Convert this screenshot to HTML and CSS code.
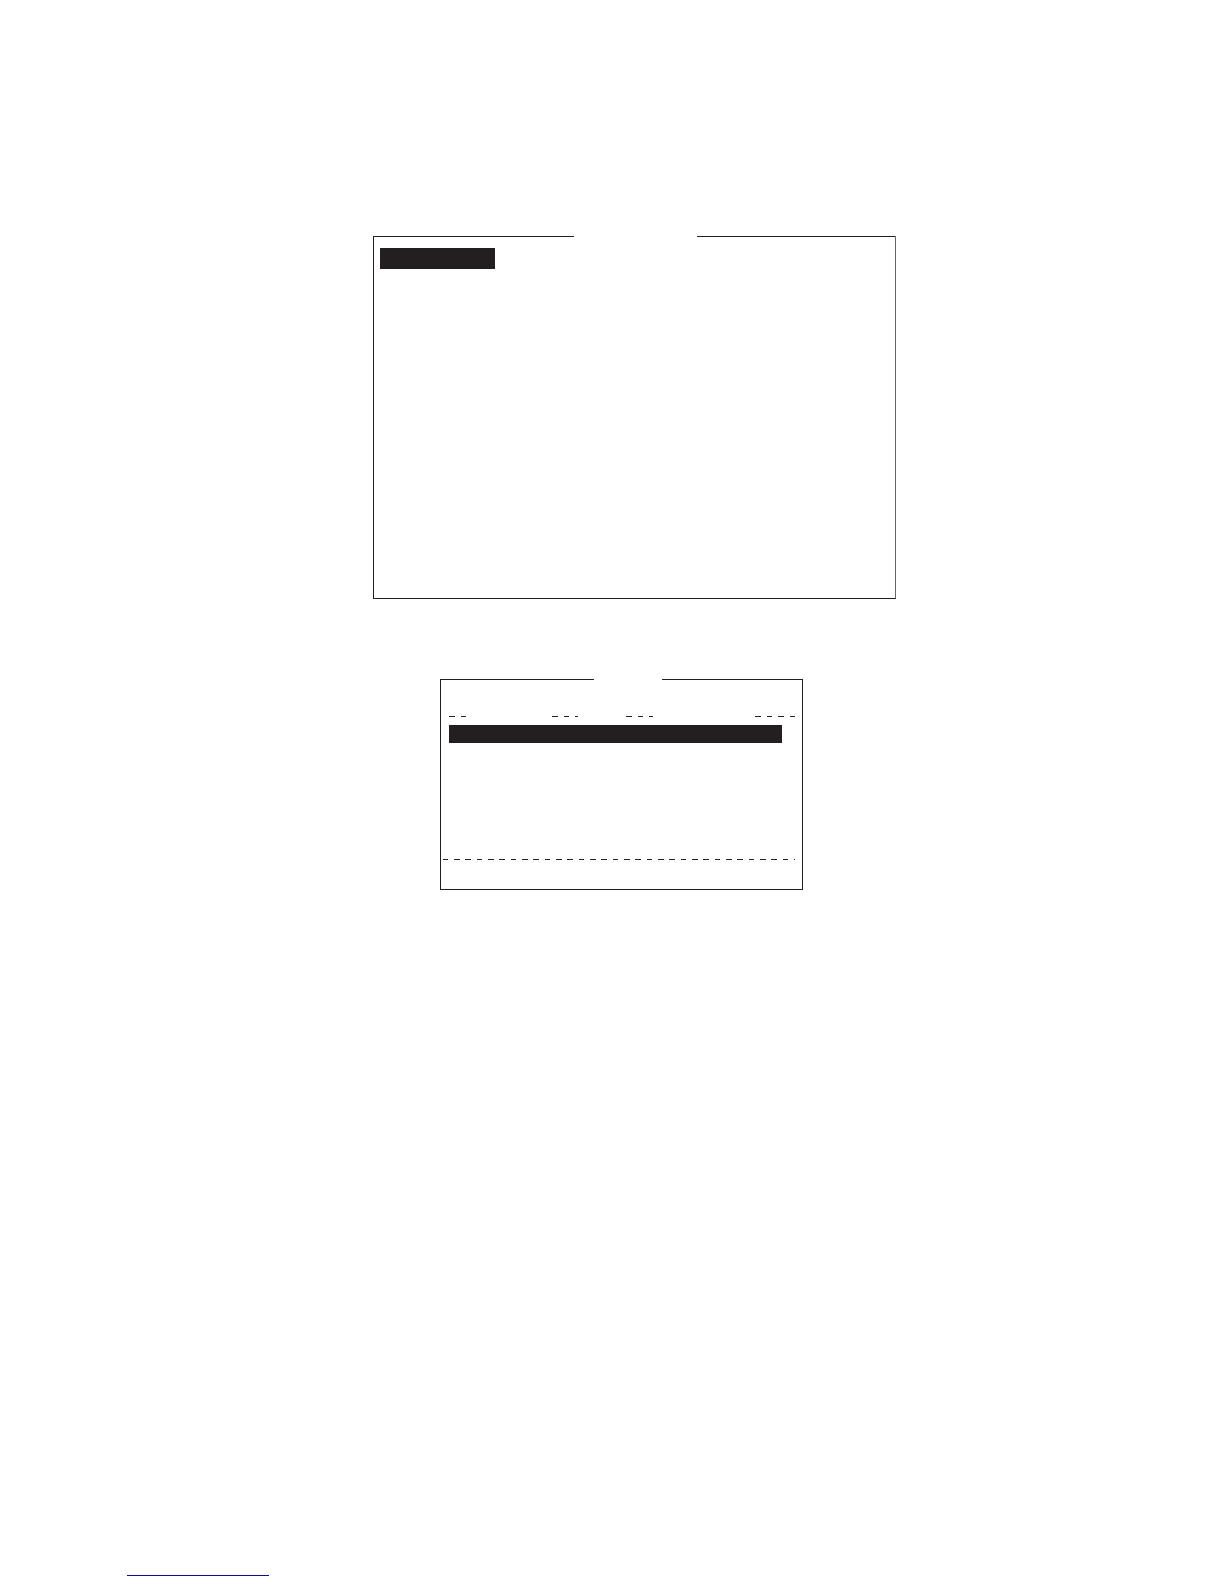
FILE: index.html
```
<!DOCTYPE html>
<html lang="en">
<head>
    <meta charset="UTF-8">
    <meta name="viewport" content="width=device-width, initial-scale=1.0">
    <title>Menu screens</title>
    <link rel="stylesheet" href="styles.css">
</head>
<body>
    <main class="screens">
        <section class="screen menu-screen">
            <div class="top-edge"><span></span><span></span></div>
            <div class="selected menu-item"></div>
        </section>

        <section class="screen list-screen">
            <div class="top-edge"><span></span><span></span></div>
            <div class="column-rules">
                <svg width="17" height="1"><line x2="17" y1="0.5" y2="0.5"/></svg>
                <svg width="26" height="1"><line x2="26" y1="0.5" y2="0.5"/></svg>
                <svg width="27" height="1"><line x2="27" y1="0.5" y2="0.5"/></svg>
                <svg width="40" height="1"><line x2="40" y1="0.5" y2="0.5"/></svg>
            </div>
            <div class="selected list-row"></div>
            <svg class="bottom-rule" height="1"><line x2="100%" y1="0.5" y2="0.5"/></svg>
        </section>
    </main>
    <footer>
        <a class="footer-link" href="#"></a>
    </footer>
</body>
</html>
```

FILE: styles.css
```
* {
    box-sizing: border-box;
}

body {
    font-family: Arial, "Liberation Sans", sans-serif;
    background-color: #fff;
    margin: 0;
    min-height: 100vh;
    display: flex;
    flex-direction: column;
}

.screens {
    display: flex;
    flex-direction: column;
    align-items: center;
    gap: 80px;
    padding-top: 236px;
}

.screen {
    border: 1px solid #231f20;
    border-top: none;
    max-width: 100%;
}

.menu-screen {
    width: 523px;
    min-height: 363px;
    margin-left: 45px;
    border-right-color: #666;
}

.list-screen {
    width: 363px;
    min-height: 211px;
    margin-left: 19px;
}

/* top border, open in the middle for the title */
.top-edge {
    display: flex;
    justify-content: space-between;
}

.top-edge span {
    height: 1px;
    background-color: #231f20;
}

.menu-screen .top-edge span:first-child {
    width: 200px;
}

.menu-screen .top-edge span:last-child {
    width: 198px;
}

.list-screen .top-edge span:first-child {
    width: 153px;
}

.list-screen .top-edge span:last-child {
    width: 140px;
}

.selected {
    background-color: #231f20;
}

.menu-item {
    width: 115px;
    height: 21px;
    margin: 11px 6px;
}

.column-rules {
    display: grid;
    grid-template-columns: 103px 74px 1fr 40px;
    margin: 36px 7px 8px 8px;
}

.list-row {
    height: 18px;
    margin: 0 20px 0 8px;
}

svg {
    display: block;
}

line {
    stroke: #231f20;
    stroke-width: 1px;
    stroke-dasharray: 6 6 5 6;
    shape-rendering: crispEdges;
}

.bottom-rule {
    width: calc(100% - 9px);
    margin: 116px 7px 0 2px;
}

.bottom-rule line {
    stroke-dasharray: 5 6 6 5 6 6;
}

footer {
    margin-top: auto;
    padding: 0 127px 8px;
}

.footer-link {
    display: block;
    width: 142px;
    border-bottom: 1px solid #10108c;
}
```
